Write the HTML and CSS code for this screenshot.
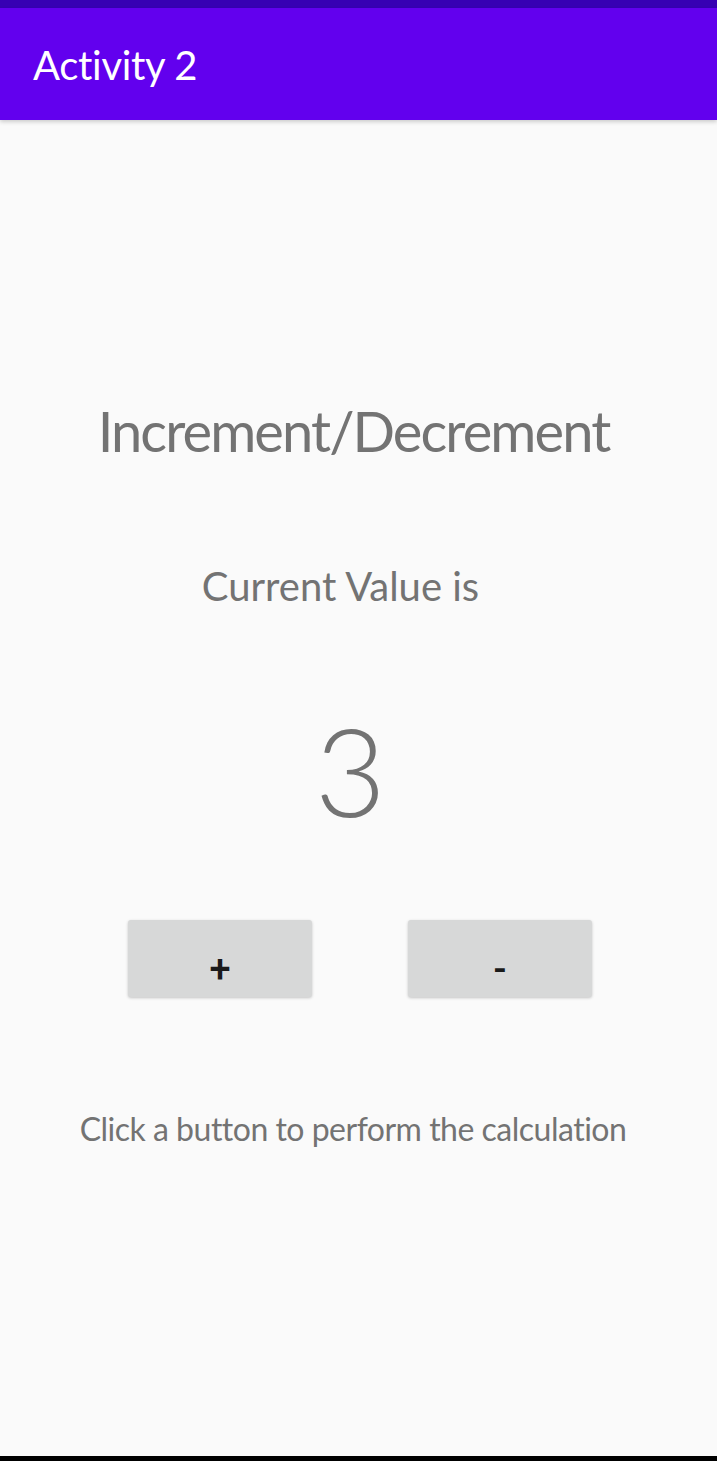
FILE: index.html
```html
<!DOCTYPE html>
<html>
<head>
<meta charset="utf-8">
<link rel="stylesheet" href="styles.css">
</head>
<body>
<div class="status"></div>
<header class="appbar"><span class="appbar-title">Activity 2</span></header>
<main class="content">
  <div class="heading">Increment/Decrement</div>
  <div class="label">Current Value is</div>
  <div class="value">3</div>
  <div class="buttons">
    <button class="btn"><span class="btn-text">+</span></button>
    <button class="btn"><span class="btn-text minus">-</span></button>
  </div>
  <div class="hint">Click a button to perform the calculation</div>
</main>
<div class="navbar"></div>
</body>
</html>
```
FILE: styles.css
```css
html, body {
  margin: 0;
  padding: 0;
  height: 100%;
}
body {
  background: #FAFAFA;
  font-family: Lato, "Open Sans", sans-serif;
  display: flex;
  flex-direction: column;
  min-height: 1461px;
}
.status {
  height: 8px;
  background: #3700B3;
  flex: none;
}
.appbar {
  height: 112px;
  box-sizing: border-box;
  background: #6200EE;
  padding: 33px 0 0 33px;
  box-shadow: 0 2px 4px rgba(0,0,0,0.18);
  position: relative;
  z-index: 1;
  flex: none;
}
.appbar-title {
  color: #fff;
  font-size: 40px;
  line-height: 1.2;
  letter-spacing: -0.3px;
  display: block;
}
.content {
  flex: 1;
  display: flex;
  flex-direction: column;
  align-items: center;
  padding-top: 277px;
  color: #737373;
}
.heading {
  font-size: 56px;
  line-height: 1.2;
  letter-spacing: -1.9px;
  margin-right: 10px;
}
.label {
  font-size: 40px;
  line-height: 1.2;
  margin-top: 98px;
  margin-right: 36px;
}
.value {
  font-size: 123px;
  line-height: 1.2;
  margin-top: 86px;
  margin-right: 16px;
  font-weight: 300;
}
.buttons {
  display: flex;
  gap: 96px;
  margin-top: 76px;
  margin-left: 3px;
}
.btn {
  width: 184px;
  height: 77px;
  border: none;
  border-radius: 3px;
  background: #D7D8D8;
  box-shadow: 0 1px 3px rgba(0,0,0,0.22);
  display: flex;
  align-items: center;
  justify-content: center;
  padding: 22px 0 0 0;
  font-family: Roboto, Lato, sans-serif;
  color: #1a1a1a;
}
.btn-text {
  font-size: 38px;
  font-weight: 500;
  line-height: 1;
}
.hint {
  font-size: 32px;
  line-height: 1.2;
  letter-spacing: -0.5px;
  margin-top: 113px;
  margin-right: 11px;
}
.navbar {
  height: 5px;
  background: #000;
  flex: none;
}
```
